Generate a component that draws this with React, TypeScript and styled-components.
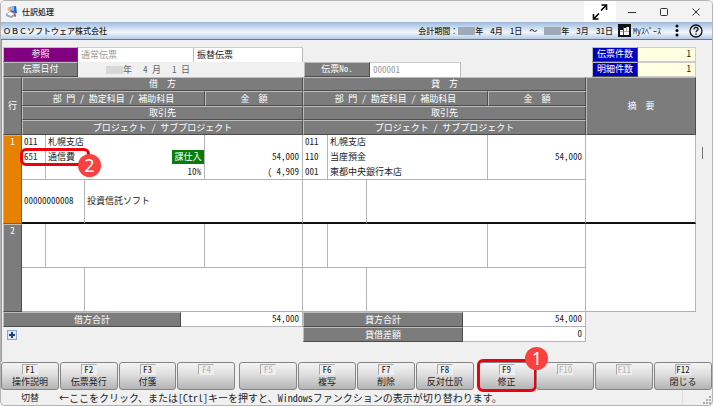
import React from "react";
import styled, { createGlobalStyle, css } from "styled-components";

const Global = createGlobalStyle`
  * { box-sizing: border-box; }
  body {
    margin: 0;
    background: #f0f0f0;
    color: #222;
    font: 9px/14px "Noto Sans CJK JP", "Noto Sans", sans-serif;
    font-feature-settings: "hwid";
  }
  button, input { font: inherit; font-feature-settings: inherit; color: inherit; margin: 0; padding: 0; }
`;

const bevel = css`
  background: #7c7c7c;
  color: #fff;
  border: 1px solid;
  border-color: #bdbdbd #4c4c4c #4c4c4c #bdbdbd;
`;

const Window = styled.div`
  display: flex;
  flex-direction: column;
  min-height: 100vh;
  border: 1px solid #b4b4b4;
  border-radius: 5px;
  background: #f0f0f0;
  overflow: hidden;
`;

const TitleBar = styled.header`
  display: flex;
  align-items: center;
  height: 21px;
  padding-left: 5px;
  background: #f3f3f3;
`;

const Title = styled.h1`
  flex: 1;
  margin: 0 0 0 4px;
  font-size: 8px;
  font-weight: 500;
`;

const CaptionButton = styled.button<{ $light?: boolean }>`
  display: grid;
  place-items: center;
  width: 32px;
  height: 21px;
  border: 0;
  background: ${(p) => (p.$light ? "#fff" : "transparent")};
`;

const InfoBar = styled.div`
  display: flex;
  align-items: center;
  height: 18px;
  padding: 0 9px 0 2px;
  border-bottom: 1px solid #777;
  background: linear-gradient(#9db9db, #dce8f5 45%, #f1f6fb 60%, #b5cbe5);
  font-size: 8px;
`;

const Company = styled.strong`
  flex: 1;
  font-weight: 500;
  font-feature-settings: normal;
`;

const Period = styled.div`
  display: flex;
  align-items: center;
  gap: 7px;
  font-weight: 500;
  font-feature-settings: normal;
`;

const Year = styled.span`
  display: flex;
  align-items: center;
`;

const Mask = styled.span<{ $tone?: string }>`
  width: 17px;
  height: 8px;
  background: ${(p) => p.$tone || "#9faab8"};
`;

const BarButton = styled.button<{ $gap: number }>`
  display: flex;
  align-items: center;
  gap: 2px;
  margin-left: ${(p) => p.$gap}px;
  border: 0;
  background: none;
`;

const Main = styled.main`
  display: flex;
  flex: 1;
  border-left: 1px solid #999;
`;

const Sheet = styled.div`
  flex: 1;
  min-width: 0;
  padding: 7px 0 0 1px;
`;

const ScrollTrack = styled.div`
  width: 16px;
  padding: 107px 0 0 6px;
`;

const ScrollThumb = styled.div`
  width: 1px;
  height: 12px;
  background: #777;
`;

const FormTop = styled.div`
  display: flex;
  justify-content: space-between;
`;

const FormRow = styled.div`
  display: flex;
  height: 15px;
`;

const Caption = styled.label<{ $width: number; $tone?: string }>`
  ${bevel}
  width: ${(p) => p.$width}px;
  height: 15px;
  line-height: 12px;
  text-align: center;
  background: ${(p) => p.$tone || "#7c7c7c"};
`;

const Field = styled.input<{ $width: number; $dim?: boolean }>`
  width: ${(p) => p.$width}px;
  height: 15px;
  padding: 0 0 2px 3px;
  border: 0;
  border-right: 1px solid #bbb;
  border-top: 1px solid #ccc;
  border-radius: 0;
  background: #fff;
  line-height: 12px;
  color: ${(p) => (p.$dim ? "#999" : "#222")};
`;

const DateField = styled.div`
  display: flex;
  align-items: center;
  gap: 11px;
  width: 226px;
  padding-left: 28px;
  color: #666;
`;

const Count = styled.output`
  width: 58px;
  height: 15px;
  padding-right: 4px;
  border: 1px solid #ccc;
  border-left: 0;
  background: #ffffe1;
  line-height: 12px;
  text-align: right;
`;

const Ledger = styled.table`
  width: 100%;
  table-layout: fixed;
  border-collapse: separate;
  border-spacing: 0;
  background: #fff;
`;

const Head = styled.th<{ $h: number; $wide?: boolean }>`
  ${bevel}
  height: ${(p) => p.$h}px;
  padding: 0;
  font-weight: 400;
  font-feature-settings: ${(p) => (p.$wide ? "normal" : "inherit")};
  line-height: 12px;
  white-space: pre;
`;

const LineNo = styled.th<{ $active?: boolean }>`
  ${bevel}
  padding: 0;
  vertical-align: top;
  font-weight: 400;
  line-height: 12px;
  ${(p) => p.$active && "background: #e68200; border-color: #f0a850 #9a5a00 #9a5a00 #f0a850;"}
`;

const Cell = styled.td<{ $h: number; $right?: boolean; $middle?: boolean; $rule?: "thin" | "thick" }>`
  height: ${(p) => p.$h}px;
  padding: ${(p) => (p.$right ? "0 3px 0 0" : "0 0 0 2px")};
  border-right: 1px solid #b5b5b8;
  border-bottom: ${(p) => (p.$rule === "thick" ? "2px solid #111" : p.$rule === "thin" ? "1px solid #b0b0b0" : "0")};
  line-height: 14px;
  text-align: ${(p) => (p.$right ? "right" : "left")};
  white-space: nowrap;
  vertical-align: ${(p) => (p.$middle ? "middle" : "top")};
`;

const Spread = styled.div`
  display: flex;
  justify-content: space-between;
`;

const TaxTag = styled.span`
  width: 32px;
  background: #087d08;
  color: #fff;
  text-align: center;
`;

const Anchor = styled.div`
  position: relative;
`;

const Callout = styled.span`
  position: absolute;
  top: -2px;
  left: -4px;
  width: 70px;
  height: 18px;
  border: 3px solid #f0000f;
  border-radius: 6px;
  pointer-events: none;
`;

const Badge = styled.b`
  position: absolute;
  top: 4px;
  left: 54px;
  z-index: 2;
  width: 23px;
  height: 23px;
  border-radius: 50%;
  background: #f9423f;
  color: #fff;
  font: 18px/23px "Noto Sans", sans-serif;
  font-feature-settings: normal;
  text-align: center;
`;

const Totals = styled.table`
  width: 100%;
  table-layout: fixed;
  border-collapse: separate;
  border-spacing: 0;
`;

const Sum = styled.td`
  height: 15px;
  padding: 0 3px 0 0;
  border: 1px solid #b5b5b8;
  border-width: 0 1px 1px 0;
  background: #fff;
  line-height: 14px;
  text-align: right;
`;

const Blank = styled.td`
  padding: 0;
`;

const AddButton = styled.button`
  display: grid;
  place-items: center;
  width: 10px;
  height: 10px;
  margin-left: 4px;
  border: 1px solid #8ba6c8;
  background: #dce9f8;
`;

const KeyBar = styled.nav`
  display: flex;
  gap: 4px;
`;

const KeyGroup = styled.div`
  display: grid;
  flex: 1;
  grid-template-columns: repeat(4, 1fr);
  gap: 1px;
`;

const Slot = styled.div`
  position: relative;
`;

const KeyButton = styled.button`
  display: flex;
  flex-direction: column;
  align-items: center;
  width: 100%;
  height: 28px;
  border: 1px solid #858585;
  border-radius: 3px;
  background: linear-gradient(#f4f4f4, #dedede 45%, #b4b4b4);
  line-height: 13px;
  &:disabled { color: #b4b4b4; }
`;

const KeyCap = styled.span`
  min-width: 16px;
  height: 11px;
  margin-top: 1px;
  border: 1px solid;
  border-color: #aaa #eee #eee #aaa;
  background: #eee;
  line-height: 9px;
`;

const KeyCallout = styled(Callout)`
  top: -3px;
  left: -1px;
  width: calc(100% + 3px);
  height: 33px;
`;

const KeyBadge = styled(Badge)`
  top: -15px;
  left: auto;
  right: -13px;
`;

const StatusBar = styled.footer`
  display: flex;
  align-items: center;
  height: 15px;
  font-size: 10px;
`;

const StatusButton = styled.button`
  width: 58px;
  border: 0;
  background: none;
  font-size: 9px;
`;

const Hint = styled.p`
  flex: 1;
  margin: 0;
`;

const Grip = styled.span`
  display: flex;
  align-items: flex-end;
  justify-content: flex-end;
  align-self: stretch;
  width: 30px;
  border-left: 1px solid #ddd;
`;

const AppIcon = () => (
  <svg width="12" height="12" viewBox="0 0 12 12">
    <path d="M4 1l6-1 1 7-3 1-4-3z" fill="#2469cf" />
    <path d="M5 1l3 0v4l-3-1z" fill="#8cc6ff" />
    <circle cx="3.500" cy="3" r="2" fill="#eab078" />
    <path d="M0 8l4-3 5 2v3l-4 2-5-2z" fill="#9ea4b8" />
    <path d="M1 8l3-2 4 2-3 2z" fill="#fff" />
    <path d="M8 7l2 2v2l-2-1z" fill="#d84b50" />
  </svg>
);

const ExpandIcon = () => (
  <svg width="16" height="16" viewBox="0 0 16 16" fill="none" stroke="#000" strokeWidth="1.6">
    <path d="M9.500 1h5v5M14.500 1L9 6.500M6.500 15h-5v-5M1.500 15L7 9.500" />
  </svg>
);

const GridIcon = () => (
  <svg width="13" height="13" viewBox="0 0 13 13">
    <path d="M0 0h13v13H0z" fill="#111" />
    <path d="M2 6h3v5H2zM6 4h2v7H6zM8 3h3v8H8z" fill="#fff" />
    <path d="M2 7.500h9M5.500 3v8M8.500 3v4" stroke="#777" strokeWidth=".6" />
  </svg>
);

const keys = [
  ["操作説明", "伝票発行", "付箋", ""],
  ["", "複写", "削除", "反対仕訳"],
  ["修正", "", "", "閉じる"],
];

export default function App() {
  return (
    <>
      <Global />
      <Window>
        <TitleBar>
          <AppIcon />
          <Title>仕訳処理</Title>
          <CaptionButton $light aria-label="全画面"><ExpandIcon /></CaptionButton>
          <CaptionButton aria-label="最小化">
            <svg width="8" height="8" stroke="#333"><path d="M0 4.500h8" /></svg>
          </CaptionButton>
          <CaptionButton aria-label="最大化">
            <svg width="8" height="8" fill="none" stroke="#333"><rect x=".5" y=".5" width="7" height="7" rx="1" /></svg>
          </CaptionButton>
          <CaptionButton aria-label="ウィンドウを閉じる">
            <svg width="8" height="8" stroke="#333"><path d="M.5.5l7 7M7.500.5l-7 7" /></svg>
          </CaptionButton>
        </TitleBar>
        <InfoBar>
          <Company>ＯＢＣソフトウェア株式会社</Company>
          <Period>
            <Year>会計期間：<Mask />年</Year>
            <span>4月</span>
            <span>1日</span>
            <span>～</span>
            <Year><Mask />年</Year>
            <span>3月</span>
            <span>31日</span>
          </Period>
          <BarButton $gap={5}><GridIcon />Myｽﾍﾟｰｽ</BarButton>
          <BarButton $gap={14} aria-label="メニュー">
            <svg width="4" height="13"><circle cx="2" cy="2" r="1.500" /><circle cx="2" cy="6.500" r="1.500" /><circle cx="2" cy="11" r="1.500" /></svg>
          </BarButton>
          <BarButton $gap={10} aria-label="ヘルプ">
            <svg width="14" height="14" viewBox="0 0 14 14" fill="none" stroke="#111" strokeWidth="1.300">
              <circle cx="7" cy="7" r="6" /><path d="M5 5.500c0-3 4-2.500 4-.3C9 6.500 7 6.500 7 8.300M7 9.500v1.300" />
            </svg>
          </BarButton>
        </InfoBar>
        <Main>
          <Sheet>
            <FormTop>
              <div>
                <FormRow>
                  <Caption as="span" $width={75} $tone="#800080">参照</Caption>
                  <Field $width={116} $dim aria-label="伝票種別" defaultValue="通常伝票" />
                  <Field $width={109} aria-label="伝票形式" defaultValue="振替伝票" />
                </FormRow>
                <FormRow>
                  <Caption as="span" $width={75}>伝票日付</Caption>
                  <DateField>
                    <Year><Mask $tone="#d8d8d8" />年</Year>
                    <span>4 月</span>
                    <span>1 日</span>
                  </DateField>
                  <Caption htmlFor="slip-no" $width={66}>伝票No.</Caption>
                  <Field id="slip-no" $width={91} $dim defaultValue="000001" />
                </FormRow>
              </div>
              <div>
                <FormRow><Caption as="span" $width={46} $tone="#0000c0">伝票件数</Caption><Count>1</Count></FormRow>
                <FormRow><Caption as="span" $width={46} $tone="#0000c0">明細件数</Caption><Count>1</Count></FormRow>
              </div>
            </FormTop>
            <Ledger>
              <colgroup>
                {[19, 24, 39, 120, 98, 25, 39, 121, 98, 110].map((w, i) => <col key={i} style={{ width: w }} />)}
              </colgroup>
              <thead>
                <tr>
                  <Head $h={14} rowSpan={4}>行</Head>
                  <Head $h={14} $wide colSpan={4}>借　方</Head>
                  <Head $h={14} $wide colSpan={4}>貸　方</Head>
                  <Head $h={14} $wide rowSpan={4}>摘　要</Head>
                </tr>
                <tr>
                  <Head $h={15} colSpan={3}>部　門 / 勘定科目 / 補助科目</Head>
                  <Head $h={15} $wide>金　額</Head>
                  <Head $h={15} colSpan={3}>部　門 / 勘定科目 / 補助科目</Head>
                  <Head $h={15} $wide>金　額</Head>
                </tr>
                <tr>
                  <Head $h={14} colSpan={4}>取引先</Head>
                  <Head $h={14} colSpan={4}>取引先</Head>
                </tr>
                <tr>
                  <Head $h={15} colSpan={4}>プロジェクト / サブプロジェクト</Head>
                  <Head $h={15} colSpan={4}>プロジェクト / サブプロジェクト</Head>
                </tr>
              </thead>
              <tbody>
                <tr>
                  <LineNo rowSpan={4} $active>1</LineNo>
                  <Cell $h={15}>011</Cell>
                  <Cell $h={15} colSpan={2}>札幌支店</Cell>
                  <Cell $h={15} />
                  <Cell $h={15}>011</Cell>
                  <Cell $h={15} colSpan={2}>札幌支店</Cell>
                  <Cell $h={15} />
                  <Cell $h={15} rowSpan={4} $rule="thick" />
                </tr>
                <tr>
                  <Cell $h={15}><Anchor>651<Callout /><Badge>2</Badge></Anchor></Cell>
                  <Cell $h={15} colSpan={2}><Spread>通信費<TaxTag>課仕入</TaxTag></Spread></Cell>
                  <Cell $h={15} $right>54,000</Cell>
                  <Cell $h={15}>110</Cell>
                  <Cell $h={15} colSpan={2}>当座預金</Cell>
                  <Cell $h={15} $right>54,000</Cell>
                </tr>
                <tr>
                  <Cell $h={15} $rule="thin" />
                  <Cell $h={15} $rule="thin" $right colSpan={2}>10%</Cell>
                  <Cell $h={15} $rule="thin" $right>( 4,909</Cell>
                  <Cell $h={15} $rule="thin">001</Cell>
                  <Cell $h={15} $rule="thin" colSpan={2}>東都中央銀行本店</Cell>
                  <Cell $h={15} $rule="thin" />
                </tr>
                <tr>
                  <Cell $h={44} $rule="thick" $middle colSpan={2}>00000000008</Cell>
                  <Cell $h={44} $rule="thick" $middle colSpan={2}>投資信託ソフト</Cell>
                  <Cell $h={44} $rule="thick" colSpan={2} />
                  <Cell $h={44} $rule="thick" colSpan={2} />
                </tr>
                <tr>
                  <LineNo rowSpan={2}>2</LineNo>
                  <Cell $h={44} $rule="thin" />
                  <Cell $h={44} $rule="thin" colSpan={2} />
                  <Cell $h={44} $rule="thin" />
                  <Cell $h={44} $rule="thin" />
                  <Cell $h={44} $rule="thin" colSpan={2} />
                  <Cell $h={44} $rule="thin" />
                  <Cell $h={44} $rule="thin" rowSpan={2} />
                </tr>
                <tr>
                  <Cell $h={44} $rule="thin" colSpan={2} />
                  <Cell $h={44} $rule="thin" colSpan={2} />
                  <Cell $h={44} $rule="thin" colSpan={2} />
                  <Cell $h={44} $rule="thin" colSpan={2} />
                </tr>
              </tbody>
            </Ledger>
            <Totals>
              <colgroup>
                {[178, 122, 160, 123, 110].map((w, i) => <col key={i} style={{ width: w }} />)}
              </colgroup>
              <tbody>
                <tr>
                  <Head $h={15}>借方合計</Head><Sum>54,000</Sum>
                  <Head $h={15}>貸方合計</Head><Sum>54,000</Sum><Blank />
                </tr>
                <tr>
                  <Blank colSpan={2}>
                    <AddButton aria-label="行を追加">
                      <svg width="6" height="6" stroke="#1c3f7c" strokeWidth="2"><path d="M0 3h6M3 0v6" /></svg>
                    </AddButton>
                  </Blank>
                  <Head $h={15}>貸借差額</Head><Sum>0</Sum><Blank />
                </tr>
              </tbody>
            </Totals>
          </Sheet>
          <ScrollTrack><ScrollThumb /></ScrollTrack>
        </Main>
        <KeyBar>
          {keys.map((group, g) => (
            <KeyGroup key={g}>
              {group.map((name, i) => (
                <Slot key={i}>
                  <KeyButton disabled={!name}>
                    <KeyCap>F{g * 4 + i + 1}</KeyCap>
                    {name}
                  </KeyButton>
                  {name === "修正" && <><KeyCallout /><KeyBadge>1</KeyBadge></>}
                </Slot>
              ))}
            </KeyGroup>
          ))}
        </KeyBar>
        <StatusBar>
          <StatusButton>切替</StatusButton>
          <Hint>←ここをクリック、または[Ctrl]キーを押すと、Windowsファンクションの表示が切り替わります。</Hint>
          <Grip>
            <svg width="9" height="9" viewBox="0 0 9 9" fill="#aaa">
              <path d="M6 0h2v2H6zM6 3h2v2H6zM3 3h2v2H3zM6 6h2v2H6zM3 6h2v2H3zM0 6h2v2H0z" />
            </svg>
          </Grip>
        </StatusBar>
      </Window>
    </>
  );
}
